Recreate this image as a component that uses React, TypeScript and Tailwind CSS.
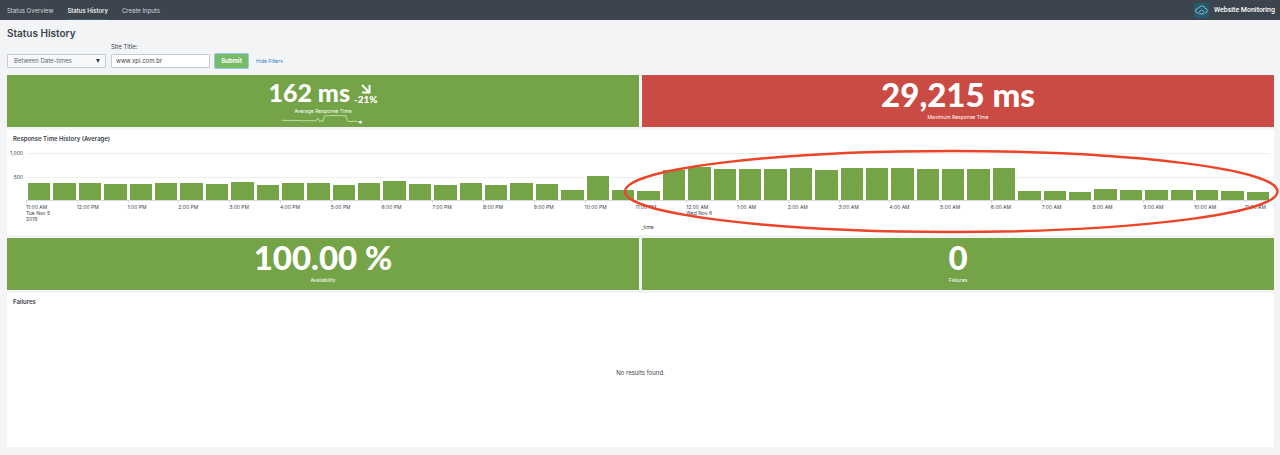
import { useState } from "react";

const NAV = ["Status Overview", "Status History", "Create Inputs"];

// Average response time in ms, one value per half hour.
const RESPONSE_TIMES = [
  370, 355, 355, 340, 350, 355, 355, 335, 385, 330, 368, 355, 330, 355, 395, 345, 330, 358, 330, 358, 345, 218, 520, 215,
  202, 645, 700, 665, 665, 668, 688, 645, 688, 688, 680, 668, 665, 660, 690, 185, 185, 160, 245, 215, 205, 215, 205, 202,
  160,
];

const HOURS = [
  "11:00 AM", "12:00 PM", "1:00 PM", "2:00 PM", "3:00 PM", "4:00 PM", "5:00 PM", "6:00 PM", "7:00 PM", "8:00 PM",
  "9:00 PM", "10:00 PM", "11:00 PM", "12:00 AM", "1:00 AM", "2:00 AM", "3:00 AM", "4:00 AM", "5:00 AM", "6:00 AM",
  "7:00 AM", "8:00 AM", "9:00 AM", "10:00 AM", "11:00 AM",
];

const DATES: Record<number, string[]> = { 0: ["Tue Nov 5", "2019"], 13: ["Wed Nov 6"] };

function Header() {
  return (
    <header className="flex h-5 items-center justify-between bg-[#3c444d] pl-[7px] pr-[5px]">
      <nav className="flex h-full gap-3.5 text-[6px]">
        {NAV.map((item) => (
          <a
            key={item}
            href="#"
            aria-current={item === "Status History" ? "page" : undefined}
            className={
              item === "Status History"
                ? "flex items-center border-b border-[#3f5f78] pt-px font-medium text-white"
                : "flex items-center border-b border-transparent pt-px text-[#d3d8de]"
            }
          >
            {item}
          </a>
        ))}
      </nav>
      <div className="flex items-center gap-[5px]">
        <svg viewBox="0 0 15 15" className="size-[15px]" aria-hidden="true">
          <rect width="15" height="15" fill="#235a6c" />
          <g fill="none" stroke="#9fc3cb" strokeWidth="0.9" strokeLinecap="round" strokeLinejoin="round">
            <path d="M4.6 10H3.9a2.2 2.2 0 0 1-.3-4.4A2.3 2.3 0 0 1 5.7 4a3 3 0 0 1 5.2 1.3 2.4 2.4 0 0 1 .6 4.7h-1" />
            <path d="M5.4 8.6 7.5 6.8l2.1 1.8M5.6 10.9h3.8" />
          </g>
        </svg>
        <span className="font-[Roboto] text-[7px] font-medium text-white">Website Monitoring</span>
      </div>
    </header>
  );
}

function Filters() {
  const [site, setSite] = useState("www.xpi.com.br");
  return (
    <form className="flex items-end gap-[5px] text-[6px] leading-[8px]" onSubmit={(e) => e.preventDefault()}>
      <div className="relative w-[99px]">
        <select
          aria-label="Time range"
          className="block h-3.5 w-full appearance-none rounded-[1px] border border-[#c3cbd4] bg-[#f7f8fa] pl-1.5 text-[#5c6773]"
        >
          <option>Between Date-times</option>
        </select>
        <svg viewBox="0 0 4 4" className="pointer-events-none absolute right-1.5 top-[5px] size-1" aria-hidden="true">
          <path d="M0 0h4L2 4z" fill="#3c444d" />
        </svg>
      </div>
      <div className="flex w-[99px] flex-col gap-[3px]">
        <label htmlFor="site" className="text-[#3c444d]">
          Site Title:
        </label>
        <input
          id="site"
          value={site}
          onChange={(e) => setSite(e.target.value)}
          className="block h-3.5 w-full rounded-[1px] border border-[#c3cbd4] bg-white px-1 pb-px text-[#3c444d]"
        />
      </div>
      <button
        type="submit"
        className="h-3.5 w-[33px] rounded-[1px] bg-[#77bb66] text-center font-bold text-white ring-1 ring-[#92cdf0]"
      >
        Submit
      </button>
      <a href="#" className="flex h-3.5 items-center pl-[3px] text-[5px] text-[#2f7fc1]">
        Hide Filters
      </a>
    </form>
  );
}

function Metric({ value, label, tone }: { value: string; label: string; tone: "green" | "red" }) {
  return (
    <section
      className={
        tone === "green"
          ? "flex h-[52px] flex-col items-center bg-[#75a347] pt-0.5 text-white"
          : "flex h-[52px] flex-col items-center bg-[#c94b43] pt-0.5 text-white"
      }
    >
      <p className="font-[Lato] text-[33px] leading-[34px] font-black">{value}</p>
      <p className="pt-0.5 text-[5px] leading-[9px]">{label}</p>
    </section>
  );
}

function AverageMetric() {
  return (
    <section className="flex h-[52px] flex-col items-center bg-[#75a347] pt-1 text-white">
      <div className="flex items-center gap-1 font-[Lato] font-black">
        <p className="text-[25px] leading-[27px]">162 ms</p>
        <div className="flex flex-col items-center pt-1">
          <svg viewBox="0 0 10 10" className="size-2.5" aria-hidden="true">
            <path d="M1 1l7 7M8.500 1v7.500H1" fill="none" stroke="white" strokeWidth="2" />
          </svg>
          <p className="text-[10px] leading-[11px]">-21%</p>
        </div>
      </div>
      <p className="pt-px text-[5px] leading-[8px]">Average Response Time</p>
      <svg viewBox="0 0 82 10" className="h-2.5 w-[82px]" aria-hidden="true">
        <path
          d="M0 5.2l6 .3 6-.2 8 .5 8-.2 6 .3L36 3.2 38 7l1.5-2L41 6.5 42.500.8 52 .6l12 .2L65 5l1 1.300 3 .2 4-.4 5 1.200"
          fill="none"
          stroke="#e3eed8"
          strokeWidth="0.7"
        />
        <circle cx="78.500" cy="7.200" r="1.400" fill="white" />
      </svg>
    </section>
  );
}

function ResponseChart() {
  return (
    <section className="relative flex h-[105px] flex-col bg-white pt-[5px] pr-1 pl-1.5">
      <h2 className="text-[6px] leading-[8px] font-semibold text-[#3c444d]">Response Time History (Average)</h2>
      <div className="mt-[10px] flex text-[5px] leading-[6px] text-[#3c444d]">
        <div className="flex h-12 w-[13px] shrink-0 flex-col items-end pr-[3px]">
          <span className="-mt-[3px] h-6">1,000</span>
          <span>500</span>
        </div>
        <div className="min-w-0 flex-1">
          <div className="flex h-12 items-end border-b border-[#d5dae0] bg-[linear-gradient(#eceef0_1px,transparent_1px)] bg-[length:100%_24px]">
            {RESPONSE_TIMES.map((ms, i) => (
              <div key={i} className="flex h-full flex-1 items-end pr-px pl-0.5">
                <div className="w-full bg-[#75a347]" style={{ height: `${ms / 10}%` }} />
              </div>
            ))}
          </div>
          <div className="flex">
            {HOURS.map((hour, i) => (
              <div
                key={i}
                className={i === HOURS.length - 1 ? "w-0 flex-1 whitespace-nowrap" : "w-0 flex-[2] whitespace-nowrap"}
              >
                <div className="h-0.5 w-px bg-[#d5dae0]" />
                <p className="pt-px">{hour}</p>
                {DATES[i]?.map((line) => (
                  <p key={line}>{line}</p>
                ))}
              </div>
            ))}
          </div>
        </div>
      </div>
      <p className="mt-[2px] pl-3 text-center text-[5px] leading-[6px] text-[#3c444d]">_time</p>
      <svg
        viewBox="0 0 100 100"
        preserveAspectRatio="none"
        className="pointer-events-none absolute top-[21px] -right-[3px] h-[81px] w-[51.500%] overflow-visible"
        aria-hidden="true"
      >
        <ellipse
          cx="50"
          cy="50"
          rx="50"
          ry="50"
          fill="none"
          stroke="#ec4427"
          strokeWidth="2.4"
          vectorEffect="non-scaling-stroke"
        />
      </svg>
    </section>
  );
}

export default function App() {
  return (
    <div className="min-h-screen bg-[#f2f4f5] font-[Inter,sans-serif]">
      <Header />
      <main className="px-[7px] pt-1.5 pr-1.5">
        <h1 className="text-[10px] leading-[14px] font-semibold text-[#3c444d]">Status History</h1>
        <div className="mt-[3px]">
          <Filters />
        </div>
        <div className="mt-[7px] flex flex-col gap-[3px]">
          <div className="grid grid-cols-2 gap-[3px]">
            <AverageMetric />
            <Metric value="29,215 ms" label="Maximum Response Time" tone="red" />
          </div>
          <ResponseChart />
          <div className="grid grid-cols-2 gap-[3px]">
            <Metric value="100.00 %" label="Availability" tone="green" />
            <Metric value="0" label="Failures" tone="green" />
          </div>
          <section className="flex h-[154px] flex-col bg-white px-1.5 pt-[5px] text-[#3c444d]">
            <h2 className="text-[6px] leading-[8px] font-semibold">Failures</h2>
            <p className="flex flex-1 items-center justify-center pb-2 text-[6px]">No results found.</p>
          </section>
        </div>
      </main>
    </div>
  );
}
